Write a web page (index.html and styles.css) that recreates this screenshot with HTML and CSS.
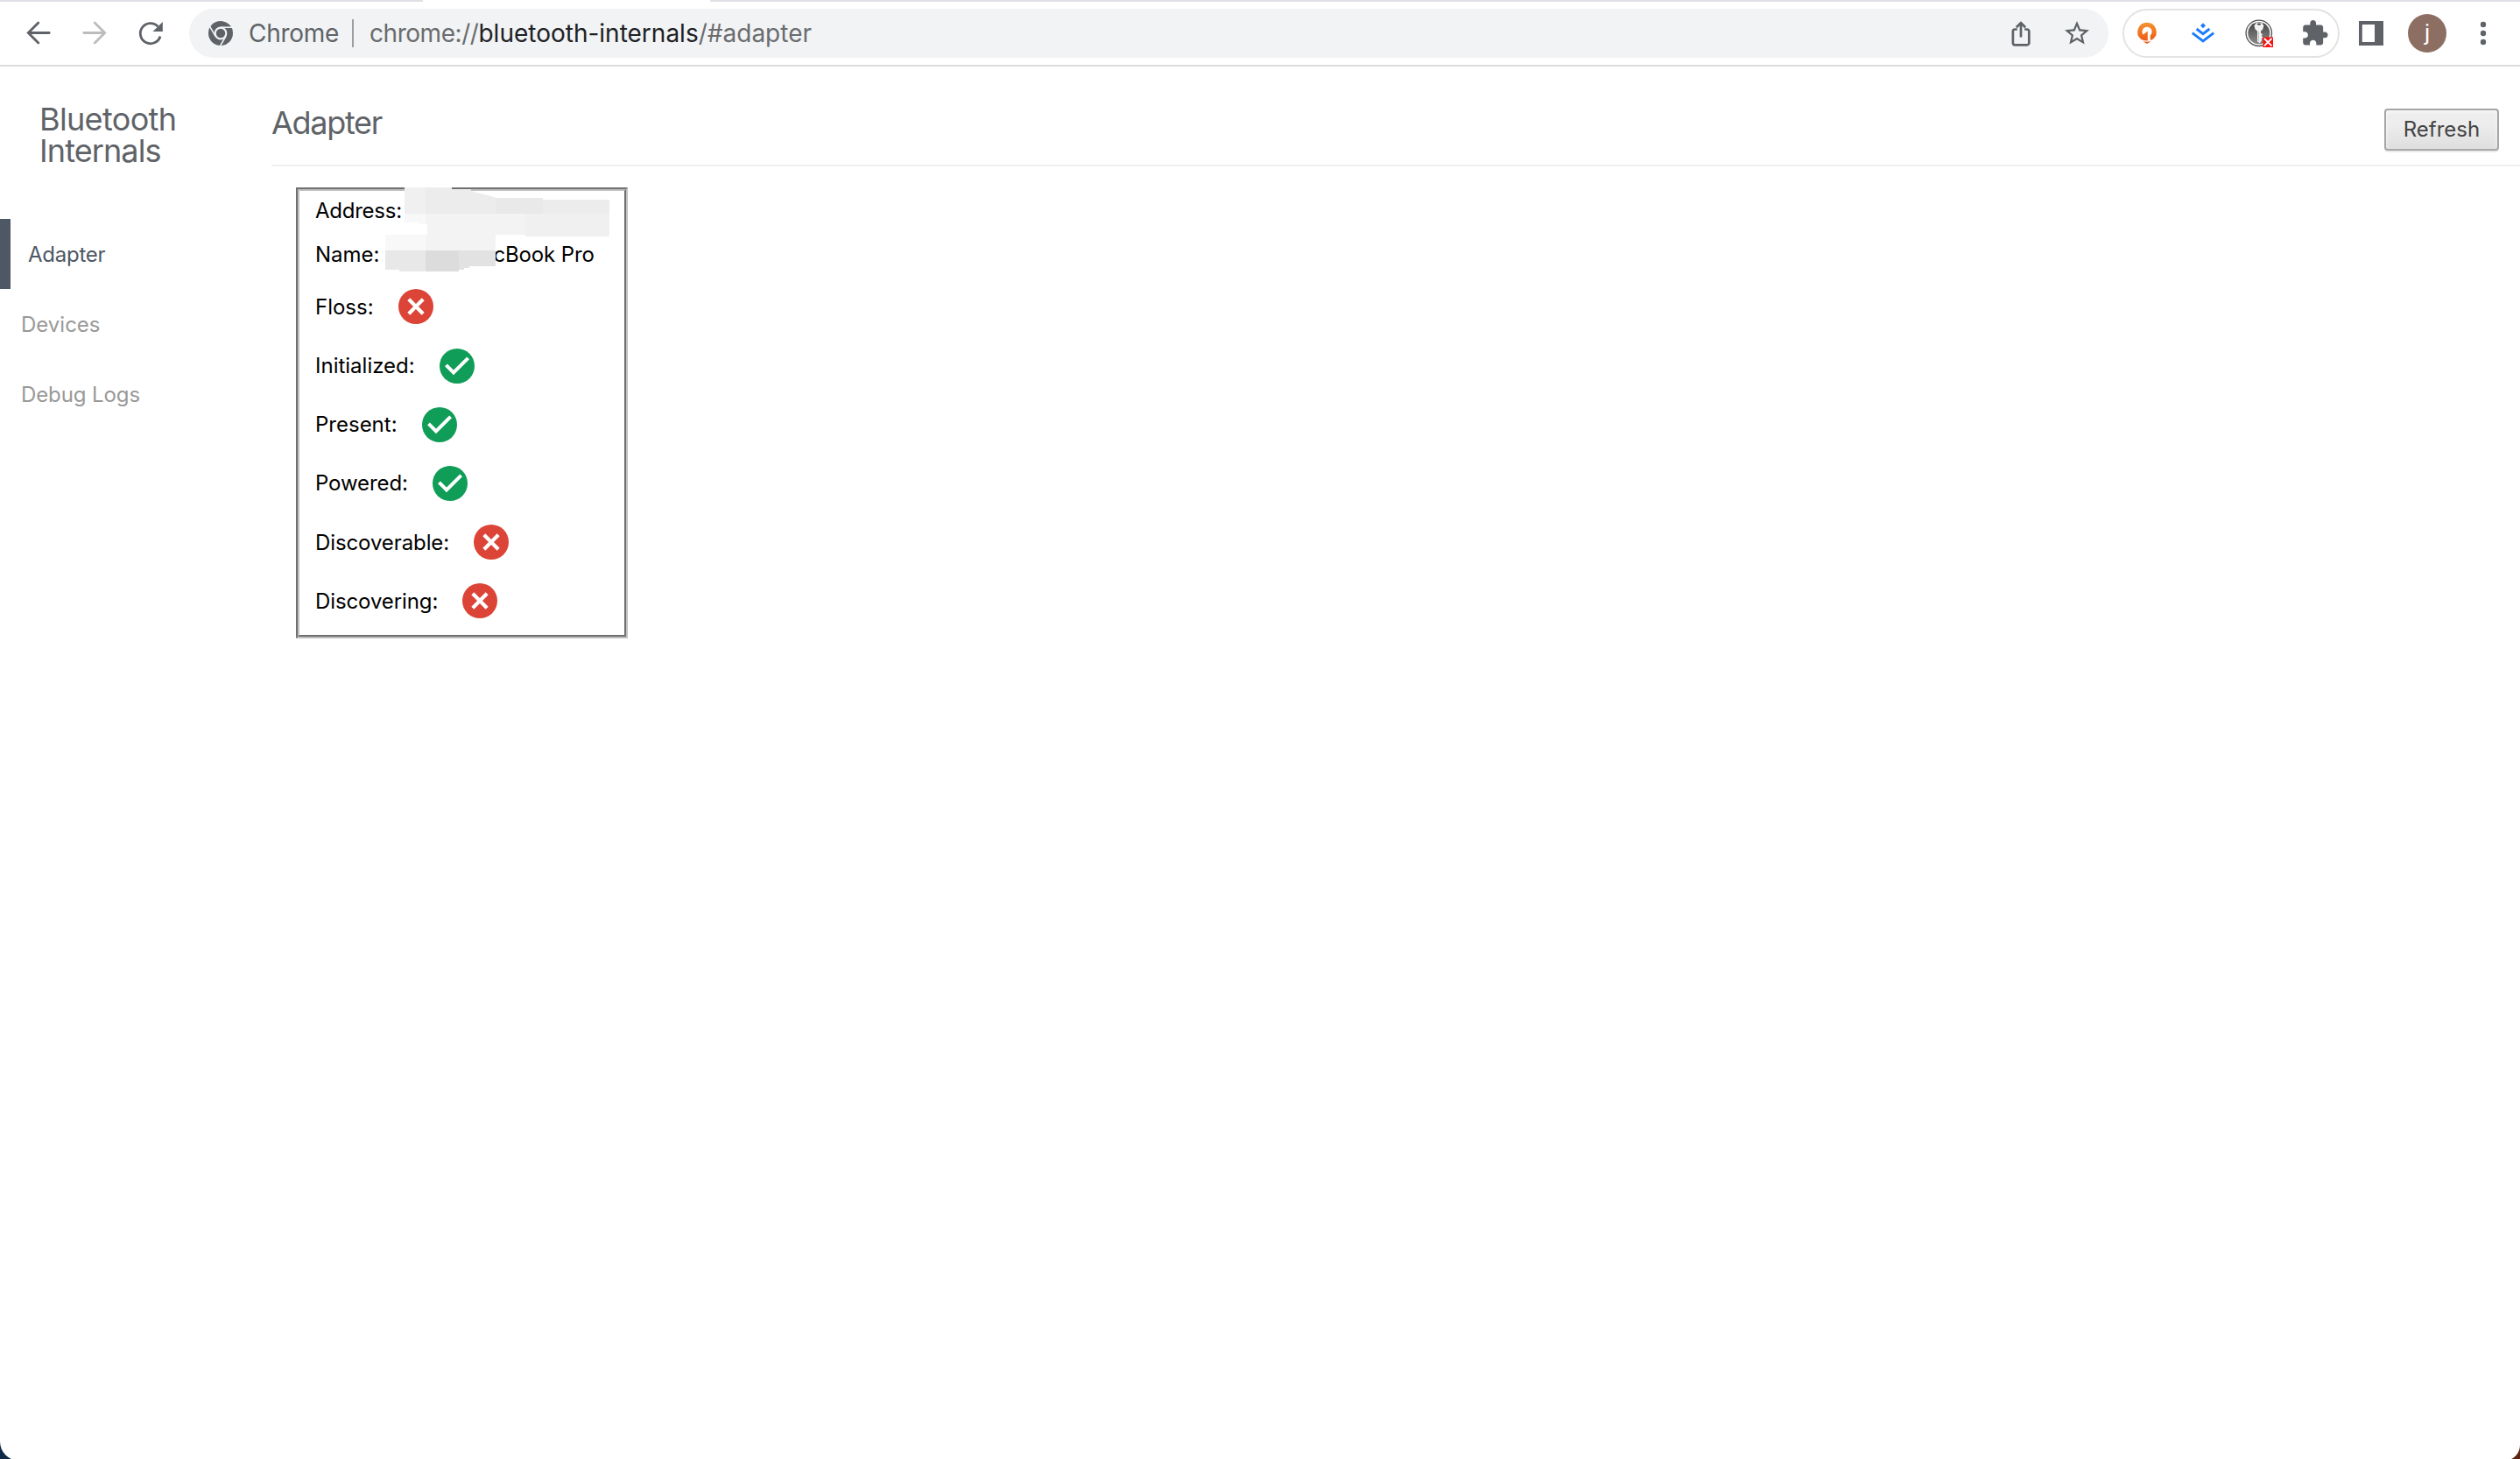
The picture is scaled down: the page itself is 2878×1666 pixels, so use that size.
FILE: index.html
```
<!DOCTYPE html>
<html lang="en">
<head>
  <meta charset="UTF-8">
  <title>Bluetooth Internals</title>
  <meta name="viewport" content="width=device-width, initial-scale=1">
  <link rel="stylesheet" href="styles.css">
</head>
<body>
  <svg class="defs" width="0" height="0">
    <symbol id="yes" viewBox="0 0 40 40">
      <circle cx="20" cy="20" r="20" fill="#0f9d58"/>
      <path d="M7.5 18.8L16 27.4L32.6 10.8" fill="none" stroke="#fff" stroke-width="4"/>
    </symbol>
    <symbol id="no" viewBox="0 0 40 40">
      <circle cx="20" cy="20" r="20" fill="#db4437"/>
      <path d="M11.8 11.8L28.2 28.2M28.2 11.8L11.8 28.2" fill="none" stroke="#fff" stroke-width="4.2"/>
    </symbol>
  </svg>

  <div class="window">
    <div class="tab-strip"><div class="active-tab"></div></div>

    <div class="toolbar">
      <div class="nav-buttons">
        <svg class="icon" viewBox="0 0 40 40"><path d="M32.2 19.5H9M19.8 8L8.3 19.5L19.8 31" fill="none" stroke="#5f6368" stroke-width="2.8" stroke-linecap="round"/></svg>
        <svg class="icon" viewBox="0 0 40 40"><path d="M7.8 19.5H31M20.2 8L31.7 19.5L20.2 31" fill="none" stroke="#bbbcbe" stroke-width="2.8" stroke-linecap="round"/></svg>
        <svg class="icon" viewBox="0 0 40 40"><path d="M28.3 12.2A11.6 11.6 0 1 0 31 23.5" fill="none" stroke="#5f6368" stroke-width="2.8"/><path d="M33.8 7V18H22.5Z" fill="#5f6368"/></svg>
      </div>

      <div class="omnibox">
        <svg class="chrome-logo" viewBox="0 0 28 28">
          <circle cx="14" cy="14" r="14" fill="#5f6368"/>
          <circle cx="14" cy="14" r="6.3" fill="none" stroke="#f1f3f4" stroke-width="2.2"/>
          <g stroke="#f1f3f4" stroke-width="1.6">
            <path d="M14 7.2H28"/>
            <path d="M14 7.2H28" transform="rotate(120 14 14)"/>
            <path d="M14 7.2H28" transform="rotate(240 14 14)"/>
          </g>
        </svg>
        <span class="origin-chip">Chrome</span>
        <span class="divider"></span>
        <span class="url"><span class="scheme">chrome://</span><span class="host">bluetooth-internals</span><span class="path">/#adapter</span></span>
        <div class="page-actions">
          <svg class="icon" viewBox="0 0 40 40"><path d="M15.8 15.5H13.2a2.3 2.3 0 0 0-2.3 2.3V31a2.3 2.3 0 0 0 2.3 2.3H27a2.3 2.3 0 0 0 2.3-2.3V17.8a2.3 2.3 0 0 0-2.3-2.3H24.2M20 24.5V9M14.8 13.3L20 8.2L25.2 13.3" fill="none" stroke="#5f6368" stroke-width="2.7"/></svg>
          <svg class="icon" viewBox="0 0 40 40"><path transform="translate(3.2 3.2) scale(1.4)" fill="#5f6368" d="M22 9.24l-7.19-.62L12 2 9.19 8.63 2 9.24l5.46 4.73L5.82 21 12 17.27 18.18 21l-1.63-7.03L22 9.24zM12 15.4l-3.76 2.27 1-4.28-3.32-2.88 4.38-.38L12 6.1l1.71 4.04 4.38.38-3.32 2.88 1 4.28L12 15.4z"/></svg>
        </div>
      </div>

      <div class="extensions">
        <svg class="icon" viewBox="0 0 40 40">
          <defs>
            <linearGradient id="orange" x1="0" y1="0" x2="0" y2="1"><stop offset="0" stop-color="#f59331"/><stop offset="1" stop-color="#ec5312"/></linearGradient>
          </defs>
          <path d="M20 7.8a10.8 10.8 0 0 0-6.6 19.3Q16 30 20 32Q24 30 26.6 27.1A10.8 10.8 0 0 0 20 7.8z" fill="url(#orange)"/>
          <path d="M15.6 21.6A5.6 5.6 0 1 1 23.6 22.6L24 28.4H20.8V17.4Z" fill="#fff"/>
          <path d="M12.4 27.6Q20 30.6 27.8 27.4" fill="none" stroke="#fff" stroke-width="1.2"/>
        </svg>
        <svg class="icon" viewBox="0 0 40 40"><path d="M20 8.3L23 11.3L20 14.3L17 11.3Z" fill="#1a7cff"/><path d="M12.6 15L20 20.7L27.4 15M7.8 19.6L20 29L32.2 19.6" fill="none" stroke="#1a7cff" stroke-width="2.9"/></svg>
        <svg class="icon" viewBox="0 0 40 40">
          <defs>
            <linearGradient id="steel" x1="0" y1="0" x2="0" y2="1"><stop offset="0" stop-color="#454545"/><stop offset="1" stop-color="#8a8a8a"/></linearGradient>
          </defs>
          <circle cx="19.8" cy="19.8" r="14.7" fill="#fff" stroke="#505050" stroke-width="1.3"/>
          <circle cx="19.8" cy="19.8" r="12.5" fill="url(#steel)"/>
          <path d="M17 7.8h6l2.4 3.4-1.2 4.4-2.2 2v2.2l2.2 1.4-1.6 1.6 1.8 1.8-1.8 1.8.6 1.6-2.6 3.2-2.6-2V17.6l-2.4-2-1.2-4.4z" fill="#f4f4f4"/>
          <ellipse cx="20" cy="9.6" rx="2.4" ry="1.1" fill="#444"/>
          <path d="M19.6 18V29" stroke="#b5b5b5" stroke-width=".9"/>
          <rect x="24.4" y="24.4" width="11.6" height="11.6" fill="#fb0f0c"/>
          <path d="M26 26L34.4 34.4M34.4 26L26 34.4" stroke="#fff" stroke-width="1.9"/>
        </svg>
        <svg class="icon" viewBox="0 0 40 40"><path transform="translate(3.5 3.7) scale(1.35)" fill="#5f6368" d="M20.5 11H19V7c0-1.1-.9-2-2-2h-4V3.5C13 2.12 11.88 1 10.5 1S8 2.12 8 3.5V5H4c-1.1 0-1.99.9-1.99 2v3.8H3.5c1.49 0 2.7 1.21 2.7 2.7s-1.21 2.7-2.7 2.7H2V20c0 1.1.9 2 2 2h3.8v-1.5c0-1.49 1.21-2.7 2.7-2.7 1.49 0 2.7 1.21 2.7 2.7V22H17c1.1 0 2-.9 2-2v-4h1.5c1.38 0 2.5-1.12 2.5-2.5S21.88 11 20.5 11z"/></svg>
      </div>

      <svg class="icon side-panel" viewBox="0 0 40 40"><path fill="#5f6368" fill-rule="evenodd" d="M6 6H34V34H6ZM9.8 10V30H24V10Z"/></svg>
      <div class="avatar">j</div>
      <svg class="icon" viewBox="0 0 40 40"><g fill="#5f6368"><circle cx="20" cy="10" r="3.2"/><circle cx="20" cy="20" r="3.2"/><circle cx="20" cy="30" r="3.2"/></g></svg>
    </div>

    <div class="content">
      <aside class="sidebar">
        <h1 class="title">Bluetooth<br><span class="title-second">Internals</span></h1>
        <ul class="menu">
          <li class="selected">Adapter</li>
          <li>Devices</li>
          <li class="logs">Debug Logs</li>
        </ul>
      </aside>

      <main class="main">
        <header class="page-header">
          <h2>Adapter</h2>
          <button class="refresh">Refresh</button>
        </header>

        <div class="fieldset">
          <div class="fieldset-inner">
            <div class="row row-address"><span class="tight">Address:</span></div>
            <div class="row row-name"><span>Name:</span><span class="name-value">cBook Pro</span></div>
            <div class="row"><span>Floss:</span><svg class="status"><use href="#no"/></svg></div>
            <div class="row"><span>Initialized:</span><svg class="status"><use href="#yes"/></svg></div>
            <div class="row"><span>Present:</span><svg class="status"><use href="#yes"/></svg></div>
            <div class="row"><span class="snug">Powered:</span><svg class="status"><use href="#yes"/></svg></div>
            <div class="row"><span class="snug">Discoverable:</span><svg class="status"><use href="#no"/></svg></div>
            <div class="row"><span class="snug">Discovering:</span><svg class="status"><use href="#no"/></svg></div>
          </div>

          <!-- address and owner name are hidden -->
          <svg class="redaction" viewBox="440 214 256 96">
            <clipPath id="smudge">
              <path d="M462 214H516V216H538V218L545 220L553 222L561 224L566 226H620V228H696V270H600V268H566V304H536V306H530V308H524V310H456V308H440V268H488V256H478V254H462Z"/>
            </clipPath>
            <g clip-path="url(#smudge)">
              <path fill="#f0f0f0" d="M440 214H486V244H440Z"/>
              <path fill="#ececec" d="M486 214H566V244H486Z"/>
              <path fill="#e9e9e9" d="M566 214H620V244H566Z"/>
              <path fill="#ececec" d="M620 214H696V244H620Z"/>
              <path fill="#f8f8f8" d="M440 244H486V286H440Z"/>
              <path fill="#f3f3f3" d="M486 244H600V286H486Z"/>
              <path fill="#f0f0f0" d="M600 244H696V286H600Z"/>
              <path fill="#e8e8e8" d="M440 286H486V310H440Z"/>
              <path fill="#dcdcdc" d="M486 286H524V310H486Z"/>
              <path fill="#e2e2e2" d="M524 286H566V310H524Z"/>
            </g>
          </svg>
        </div>
      </main>
    </div>
  </div>
</body>
</html>
```
FILE: styles.css
```
* {
  box-sizing: border-box;
}
body {
  margin: 0;
  height: 1666px;
  overflow: hidden;
  font-family: Inter, "Liberation Sans", sans-serif;
  font-size: 24px;
  /* desktop showing behind the rounded window corners */
  background: linear-gradient(90deg, #0f2b47 50%, #5e2410 50%);
}
.defs {
  position: absolute;
}
.window {
  height: 1668px;
  background: #fff;
  border-radius: 0 0 18px 22px;
  overflow: hidden;
}

/* browser toolbar */
.tab-strip {
  height: 2px;
  background: #dfdfe6;
}
.active-tab {
  width: 328px;
  height: 2px;
  margin-left: 483px;
  background: #fff;
}
.toolbar {
  display: flex;
  align-items: center;
  height: 74px;
  padding-left: 24px;
  border-bottom: 2px solid #dcdcdc;
}
.icon {
  flex: none;
  display: block;
  width: 40px;
  height: 40px;
}
.nav-buttons {
  display: flex;
  gap: 24px;
}
.omnibox {
  display: flex;
  align-items: center;
  width: 2192px;
  height: 56px;
  margin-left: 24px;
  padding: 0 16px 0 22px;
  border-radius: 28px;
  background: #f1f3f4;
  color: #5f6368;
  font-size: 28px;
}
.chrome-logo {
  width: 28px;
  height: 28px;
}
.origin-chip {
  width: 118px;
  margin-left: 18px;
  letter-spacing: -0.3px;
}
.divider {
  width: 2px;
  height: 32px;
  background: #9b9ea2;
}
.url {
  margin-left: 18px;
  white-space: nowrap;
}
.scheme {
  letter-spacing: -0.45px;
}
.host {
  color: #202124;
}
.scheme,
.path {
  color: #6a6c6f;
}
.page-actions {
  display: flex;
  gap: 24px;
  margin-left: auto;
}
.extensions {
  display: flex;
  align-items: center;
  gap: 24px;
  width: 248px;
  height: 56px;
  margin-left: 16px;
  padding-left: 6px;
  border: 2px solid #e3e3e3;
  border-radius: 28px;
}
.side-panel {
  margin-left: 16px;
}
.avatar {
  width: 44px;
  height: 44px;
  margin: 0 22px;
  border-radius: 50%;
  background: #8d6e63;
  color: #fff;
  font: 26px/42px Roboto, sans-serif;
  text-align: center;
}

/* page */
.content {
  display: flex;
}
.sidebar {
  width: 310px;
  padding-top: 42px;
}
.title {
  margin: 0 0 60px;
  padding-left: 45px;
  color: #5f6368;
  font-size: 36px;
  font-weight: 400;
  line-height: 36px;
  letter-spacing: -0.65px;
}
.title-second {
  letter-spacing: -0.9px;
}
.menu {
  list-style: none;
  margin: 0;
  padding: 0;
}
.menu li {
  height: 80px;
  padding-left: 24px;
  color: #999;
  line-height: 82px;
}
.menu .logs {
  letter-spacing: -0.1px;
}
.menu .selected {
  padding-left: 20px;
  border-left: 12px solid #4e5764;
  color: #4e5764;
  letter-spacing: -0.25px;
}
.main {
  flex: 1;
}
.page-header {
  display: flex;
  justify-content: space-between;
  align-items: flex-start;
  height: 114px;
  padding-right: 24px;
  border-bottom: 2px solid #eee;
}
.page-header h2 {
  margin: 46px 0 0;
  color: #5f6368;
  font-size: 36px;
  font-weight: 400;
  line-height: 36px;
  letter-spacing: -1.3px;
}
.refresh {
  width: 131px;
  height: 48px;
  margin-top: 48px;
  padding: 0 0 2px;
  border: 2px solid #a6a6a6;
  border-radius: 4px;
  background: linear-gradient(#ededed, #ededed 38%, #dedede);
  box-shadow: 0 2px 0 rgba(0, 0, 0, 0.08), inset 0 2px 4px rgba(255, 255, 255, 0.75);
  color: #444;
  font: 24px Inter, sans-serif;
}

/* grooved adapter box */
.fieldset {
  position: relative;
  width: 379px;
  height: 515px;
  margin: 24px 0 0 28px;
  border: 2px solid;
  border-color: #707070 #c0c0c0 #c0c0c0 #707070;
}
.fieldset-inner {
  height: 511px;
  padding-left: 18px;
  border: 2px solid;
  border-color: #c0c0c0 #707070 #707070 #c0c0c0;
  color: #000;
}
.row {
  display: flex;
  align-items: center;
  height: 67.2px;
}
.row-address {
  height: 44px;
}
.row-name {
  height: 54.8px;
  padding-top: 2px;
}
.tight {
  letter-spacing: -0.25px;
}
.snug {
  letter-spacing: -0.1px;
}
.name-value {
  margin-left: 130px;
  letter-spacing: -0.15px;
}
.status {
  width: 40px;
  height: 40px;
  margin-left: 28px;
}
.redaction {
  position: absolute;
  top: -2px;
  left: 100px;
  width: 256px;
  height: 96px;
}
```
